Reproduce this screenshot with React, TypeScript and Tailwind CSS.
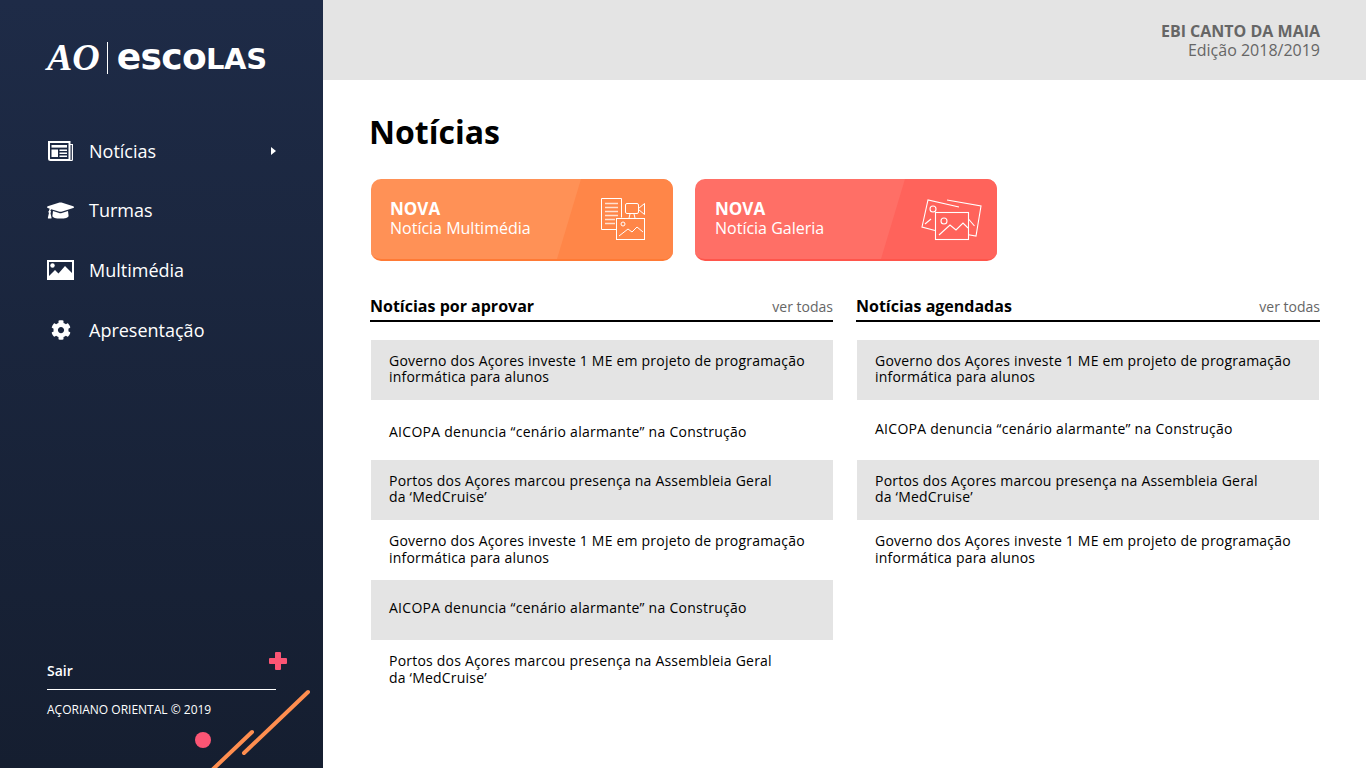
import React from 'react';
import { FaGraduationCap, FaCog } from 'react-icons/fa';

const NewspaperIcon = () => (
  <svg width="25" height="20" viewBox="0 0 25 20" fill="none">
    <path d="M1 1h20.5v18H2.5A1.5 1.5 0 0 1 1 17.5z" stroke="#fff" strokeWidth="2" />
    <path d="M22 3.5h2.4v15a1 1 0 0 1-1 1H21" stroke="#fff" strokeWidth="1.2" />
    <rect x="3.5" y="4" width="15.5" height="2.6" fill="#fff" />
    <rect x="3.5" y="8.5" width="6.5" height="7.5" fill="#fff" />
    <path d="M11.5 9.2H19M11.5 12.2H19M11.5 15.2H19" stroke="#fff" strokeWidth="1.4" />
  </svg>
);

const PictureIcon = () => (
  <svg width="27" height="20" viewBox="0 0 27 20">
    <path fillRule="evenodd" fill="#fff" d="M0 0h27v20H0zM2 2v14l6-6 3.5 3.5L18 6l7 7V2z" />
    <circle cx="5.5" cy="5.5" r="2.2" fill="#fff" />
  </svg>
);

const PlusIcon = () => (
  <svg width="18" height="18" viewBox="0 0 18 18" className="absolute top-[-1px] right-[-11px]">
    <path d="M6 1a1 1 0 0 1 1-1h4a1 1 0 0 1 1 1v5h5a1 1 0 0 1 1 1v4a1 1 0 0 1-1 1h-5v5a1 1 0 0 1-1 1H7a1 1 0 0 1-1-1v-5H1a1 1 0 0 1-1-1V7a1 1 0 0 1 1-1h5z" fill="#fb5574" />
  </svg>
);

const MultimediaArt = () => (
  <svg width="46" height="44" viewBox="0 0 46 44" fill="none" stroke="#fff" strokeWidth="1">
    <path d="M16 32.5H1.5V1.5h20v19" />
    <path d="M5 6.5h13M5 10.5h13M5 14.5h13M5 18.5h13M5 22.5h10M5 26.5h10" strokeOpacity="0.75" strokeWidth="1.4" />
    <rect x="25.5" y="6.5" width="13" height="10" rx="1.5" />
    <path d="M38.5 11.5l6-5v11l-6-5" />
    <path d="M30 17l-1 4M34 17l1 4" />
    <rect x="16.5" y="21.5" width="28" height="21" />
    <circle cx="23" cy="27" r="2" />
    <path d="M19 39l9-7 4 3 5-5 6 5" />
  </svg>
);

const GalleryArt = () => (
  <svg width="62" height="44" viewBox="0 0 62 44" fill="none" stroke="#fff" strokeWidth="1.1">
    <path d="M26 3L60 9l-5 30-7.5-1.3" />
    <path d="M14 33.5L1 30 7 3l31 7" />
    <path d="M4 27l6-5" />
    <circle cx="12" cy="12" r="3" />
    <path d="M47.5 22l6 7" />
    <rect x="14.5" y="15.5" width="33" height="27" />
    <circle cx="23" cy="24" r="3" />
    <path d="M18 38l11-10 6 5 7-7 5 5" />
  </svg>
);

const items = [
  { icon: <NewspaperIcon />, label: 'Notícias', arrow: true, row: 'h-[59px] pt-px' },
  { icon: <FaGraduationCap className="text-[27px] text-white" />, label: 'Turmas', row: 'h-[60px]' },
  { icon: <PictureIcon />, label: 'Multimédia', row: 'h-[60px]' },
  { icon: <FaCog className="text-[20px] text-white" />, label: 'Apresentação', row: 'h-[60px]' },
];

type NewsItem = { title: string[]; grey?: boolean; extra?: string };

const twoLineA = ['Governo dos Açores investe 1 ME em projeto de programação', 'informática para alunos'];
const oneLine = ['AICOPA denuncia “cenário alarmante” na Construção'];
const twoLineB = ['Portos dos Açores marcou presença na Assembleia Geral', 'da ‘MedCruise’'];

const leftNews: NewsItem[] = [
  { title: twoLineA, grey: true, extra: 'pb-[2px] leading-[16px] tracking-[0.21px]' },
  { title: oneLine, extra: 'pt-[2px] tracking-[0.27px]' },
  { title: twoLineB, grey: true, extra: 'pb-[2px] leading-[16px] tracking-[0.21px]' },
  { title: twoLineA, extra: 'pb-[2px] leading-[17px] tracking-[0.21px]' },
  { title: oneLine, grey: true, extra: 'pb-[6px] tracking-[0.27px]' },
  { title: twoLineB, extra: 'pb-[2px] leading-[17px] tracking-[0.21px]' },
];

const rightNews: NewsItem[] = [
  { title: twoLineA, grey: true, extra: 'pb-[2px] leading-[16px] tracking-[0.21px]' },
  { title: oneLine, extra: 'pb-1 tracking-[0.27px]' },
  { title: twoLineB, grey: true, extra: 'pb-[2px] leading-[16px] tracking-[0.21px]' },
  { title: twoLineA, extra: 'pb-[2px] leading-[17px] tracking-[0.21px]' },
];

const NewsColumn = ({ title, news, narrow }: { title: string; news: NewsItem[]; narrow?: boolean }) => (
  <div className="w-[464px]">
    <div className={`flex h-[30px] items-center justify-between border-b-2 border-black ${narrow ? 'mr-px' : ''}`}>
      <h2 className="text-[16px] font-bold text-black">{title}</h2>
      <span className="text-[14px] text-[#666666]">ver todas</span>
    </div>
    <div className="mt-[18px] px-px">
      {news.map((n, i) => (
        <div
          key={i}
          className={`flex h-[60px] flex-col justify-center px-[18px] text-[14px] font-medium text-black ${n.grey ? 'bg-[#e4e4e4]' : ''} ${n.extra ?? ''}`}
        >
          {n.title.map((t) => (
            <div key={t}>{t}</div>
          ))}
        </div>
      ))}
    </div>
  </div>
);

const ActionCard = ({ label, art, light, dark, edge, inset }: { label: string; art: React.ReactNode; light: string; dark: string; edge: string; inset: string }) => (
  <div className={`relative h-[82px] w-[302px] overflow-hidden rounded-[10px] border-b-2 ${edge} ${light}`}>
    <div className={`absolute inset-y-0 right-0 w-[116px] [clip-path:polygon(24px_0,100%_0,100%_100%,0_100%)] ${dark}`} />
    <div className={`relative flex h-full items-center justify-between pb-px ${inset}`}>
      <div className="text-white">
        <div className="text-[17px] leading-[18px] font-bold">NOVA</div>
        <div className="text-[16px] leading-[20px]">{label}</div>
      </div>
      {art}
    </div>
  </div>
);

export default function App() {
  return (
    <div className="flex h-[768px] w-[1366px] overflow-hidden bg-white font-['Open_Sans',sans-serif]">
      {/* Sidebar */}
      <aside className="relative flex w-[323px] shrink-0 flex-col overflow-hidden bg-gradient-to-b from-[#1e2b47] to-[#151e30] pl-[47px] text-white">
        <div className="mt-[37px] mb-px flex h-[40px] items-center">
          <span className="font-['Liberation_Serif',serif] text-[38px] leading-none font-bold italic">AO</span>
          <span className="mt-[2px] mr-[9px] ml-[7px] h-[32px] w-px bg-white" />
          <span className="flex items-baseline font-['DejaVu_Sans',sans-serif] leading-none font-bold">
            <span className="text-[36px] tracking-[-0.7px]">esco</span>
            <span className="text-[29px] tracking-[-0.3px]">LAS</span>
          </span>
        </div>

        <nav className="mt-[43px]">
          {items.map((it) => (
            <div key={it.label} className={`flex items-center pr-[47px] ${it.row}`}>
              <div className="flex w-[27px] justify-center">{it.icon}</div>
              <span className="ml-[15px] text-[18px]">{it.label}</span>
              {it.arrow && <span className="ml-auto h-0 w-0 border-y-[4.5px] border-l-[5px] border-y-transparent border-l-white" />}
            </div>
          ))}
        </nav>

        <div className="mt-auto mr-[47px] mb-[50px]">
          <div className="relative flex h-[37px] items-end border-b border-white pb-[8px] text-[14px] font-semibold">
            Sair
            <PlusIcon />
          </div>
          <div className="mt-[12px] text-[12px] leading-[16px]">AÇORIANO ORIENTAL © 2019</div>
        </div>

        <span className="absolute top-[732px] left-[195px] h-4 w-4 rounded-full bg-[#fb5574]" />
        <svg className="absolute top-[685px] left-[205px]" width="110" height="83" viewBox="0 0 110 83" fill="none" stroke="#ff8e4f" strokeWidth="4" strokeLinecap="round">
          <path d="M103 7L39 68" />
          <path d="M47 47L5 87" />
        </svg>
      </aside>

      {/* Main */}
      <main className="flex min-w-0 flex-1 flex-col">
        <header className="flex h-[80px] flex-col items-end justify-center bg-[#e4e4e4] pt-[2px] pr-[46px] text-[16px] leading-[19px] text-[#666666]">
          <div className="font-bold">EBI CANTO DA MAIA</div>
          <div>Edição 2018/2019</div>
        </header>
        <div className="pl-[47px]">
          <h1 className="mt-[29px] -ml-px text-[32px] leading-[46px] font-bold text-black">Notícias</h1>
          <div className="mt-[24px] ml-px flex gap-[22px]">
            <ActionCard label="Notícia Multimédia" inset="pl-[19px]" art={<div className="mr-[27px]"><MultimediaArt /></div>} light="bg-[#ff9156]" dark="bg-[#ff8648]" edge="border-[#ff7a35]" />
            <ActionCard label="Notícia Galeria" inset="pl-[20px]" art={<div className="mr-[14px]"><GalleryArt /></div>} light="bg-[#ff6f66]" dark="bg-[#ff635b]" edge="border-[#ff554b]" />
          </div>
          <div className="mt-[31px] flex gap-[22px]">
            <NewsColumn title="Notícias por aprovar" news={leftNews} narrow />
            <NewsColumn title="Notícias agendadas" news={rightNews} />
          </div>
        </div>
      </main>
    </div>
  );
}
